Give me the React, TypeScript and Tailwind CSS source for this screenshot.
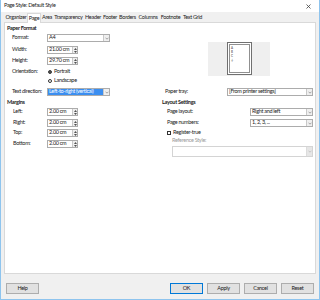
import React from "react";

const Combo = ({ w, text, selected, h = 8, disabled }: { w: number; text: string; selected?: boolean; h?: number; disabled?: boolean }) => (
  <div
    className={`flex border ${disabled ? "border-[#d4d4d4]" : "border-[#acacac]"} bg-white`}
    style={{ width: w, height: h }}
  >
    <div className={`flex-1 flex items-center pl-[1px] ${selected ? "bg-[#3b8ef0] text-white" : ""} whitespace-nowrap overflow-hidden`}>
      {text}
    </div>
    <div className={`w-[6px] flex items-center justify-center border-l ${disabled ? "border-[#dcdcdc] bg-[#e6e6e6]" : "border-[#c8c8c8] bg-[#efefef]"}`}>
      <svg width="4" height="3" viewBox="0 0 4 3">
        <path d="M0.5 0.7 L2 2.2 L3.5 0.7" fill="none" stroke={disabled ? "#b0b0b0" : "#707070"} strokeWidth="0.6" />
      </svg>
    </div>
  </div>
);

const Spin = ({ text }: { text: string }) => (
  <div className="flex w-[31px] h-[8px] border border-[#acacac] bg-white">
    <div className="flex-1 flex items-center pl-[1px] whitespace-nowrap">{text}</div>
    <div className="w-[5px] flex flex-col border-l border-[#c8c8c8] bg-[#efefef]">
      <div className="flex-1 flex items-center justify-center">
        <svg width="3" height="2" viewBox="0 0 3 2"><path d="M0 2 L1.5 0 L3 2 Z" fill="#505050" /></svg>
      </div>
      <div className="flex-1 flex items-center justify-center">
        <svg width="3" height="2" viewBox="0 0 3 2"><path d="M0 0 L1.5 2 L3 0 Z" fill="#505050" /></svg>
      </div>
    </div>
  </div>
);

const tabs: [string, number][] = [
  ["Organizer", 22],
  ["Page", 14],
  ["Area", 12],
  ["Transparency", 31],
  ["Header", 18],
  ["Footer", 16],
  ["Borders", 19],
  ["Columns", 22],
  ["Footnote", 23],
  ["Text Grid", 21],
];

const Btn = ({ children, def }: { children: React.ReactNode; def?: boolean }) => (
  <div
    className={`w-[33px] h-[11px] flex items-center justify-center bg-[#e1e1e1] border ${def ? "border-[#0078d7]" : "border-[#adadad]"}`}
  >
    {children}
  </div>
);

export default function App() {
  return (
    <div className="w-[320px] h-[300px] flex flex-col bg-[#f0f0f0] border-x border-b border-[#8ec4ee] font-['Lato',sans-serif] text-[5.5px] tracking-[-0.3px] leading-none text-[#1a1a1a] overflow-hidden">
      {/* title bar */}
      <div className="h-[12px] bg-white flex items-center justify-between pl-[3px] pr-[8px] shrink-0">
        <span>Page Style: Default Style</span>
        <svg width="5" height="5" viewBox="0 0 5 5">
          <path d="M0.5 0.5 L4.5 4.5 M4.5 0.5 L0.5 4.5" stroke="#404040" strokeWidth="0.8" />
        </svg>
      </div>
      <div className="flex-1 flex flex-col px-[3px]">
        {/* tabs */}
        <div className="mt-[1px] h-[9px] flex items-end pl-[1px]">
          {tabs.map(([t, w]) => (
            <div
              key={t}
              className={`h-[9px] flex items-center justify-center whitespace-nowrap ${
                t === "Page" ? "bg-white border-x border-t border-[#d9d9d9] -mb-[1px] h-[10px] relative z-10" : ""
              }`}
              style={{ width: w }}
            >
              {t}
            </div>
          ))}
        </div>
        {/* panel */}
        <div className="h-[252px] bg-white border border-[#d9d9d9] flex">
          {/* left column */}
          <div className="w-[155px] flex flex-col">
            <div className="h-[11px] flex items-center pl-[2px] font-bold">Paper Format</div>
            <div className="h-[8px] flex items-center pl-[7px]">
              <span className="w-[35px]">Format:</span>
              <Combo w={63} text="A4" />
            </div>
            <div className="mt-[4px] h-[8px] flex items-center pl-[7px]">
              <span className="w-[35px]">Width:</span>
              <Spin text="21.00 cm" />
            </div>
            <div className="mt-[3px] h-[8px] flex items-center pl-[7px]">
              <span className="w-[35px]">Height:</span>
              <Spin text="29.70 cm" />
            </div>
            <div className="mt-[3px] h-[8px] flex items-center pl-[7px]">
              <span className="w-[36px]">Orientation:</span>
              <span className="w-[4px] h-[4px] rounded-full border border-[#333] flex items-center justify-center mr-[2px]">
                <span className="w-[2px] h-[2px] rounded-full bg-[#222]" />
              </span>
              <span>Portrait</span>
            </div>
            <div className="mt-[1px] h-[8px] flex items-center pl-[7px]">
              <span className="w-[36px]" />
              <span className="w-[4px] h-[4px] rounded-full border border-[#333] mr-[2px]" />
              <span>Landscape</span>
            </div>
            <div className="mt-[3px] h-[8px] flex items-center pl-[7px]">
              <span className="w-[35px]">Text direction:</span>
              <Combo w={63} text="Left-to-right (vertical)" selected />
            </div>
            <div className="mt-[3px] h-[8px] flex items-center pl-[2px] font-bold">Margins</div>
            {[
              ["Left:", 1],
              ["Right:", 3],
              ["Top:", 2],
              ["Bottom:", 3],
            ].map(([l, m]) => (
              <div key={l as string} className="h-[8px] flex items-center pl-[8px]" style={{ marginTop: m as number }}>
                <span className="w-[34px]">{l}</span>
                <Spin text="2.00 cm" />
              </div>
            ))}
          </div>
          {/* right column */}
          <div className="flex-1 flex flex-col pr-[1px]">
            <div className="mt-[19px] ml-[48px] w-[62px] h-[34px] bg-[#efefef] flex">
              <div className="ml-[19px] w-[25px] h-[33px] border border-[#707070] bg-white p-[1px]">
                <div className="w-full h-full border border-[#909090] flex flex-col pl-[1px] pt-[1px] text-[3px] leading-[4px] text-[#333]">
                  <span>A</span>
                  <span>B</span>
                  <span>C</span>
                  <span>↓</span>
                </div>
              </div>
            </div>
            <div className="mt-[12px] h-[8px] flex items-center pl-[5px]">
              <span className="w-[62px]">Paper tray:</span>
              <Combo w={86} text="[From printer settings]" />
            </div>
            <div className="mt-[3px] h-[8px] flex items-center pl-[2px] font-bold">Layout Settings</div>
            <div className="mt-[1px] h-[8px] flex items-center pl-[7px]">
              <span className="w-[83px]">Page layout:</span>
              <Combo w={63} text="Right and left" />
            </div>
            <div className="mt-[3px] h-[8px] flex items-center pl-[7px]">
              <span className="w-[83px]">Page numbers:</span>
              <Combo w={63} text="1, 2, 3, ..." />
            </div>
            <div className="mt-[2px] h-[8px] flex items-center pl-[7px]">
              <span className="w-[4px] h-[4px] border border-[#333] mr-[2px]" />
              <span>Register-true</span>
            </div>
            <div className="mt-[1px] h-[6px] flex items-center pl-[12px] text-[#9a9a9a]">Reference Style:</div>
            <div className="mt-[2px] pl-[12px]">
              <Combo w={141} h={11} text="" disabled />
            </div>
          </div>
        </div>
        {/* buttons */}
        <div className="mt-[9px] h-[11px] flex items-center pl-[2px] pr-[2px]">
          <Btn>Help</Btn>
          <div className="flex-1" />
          <div className="flex gap-[4px]">
            <Btn def>OK</Btn>
            <Btn>Apply</Btn>
            <Btn>Cancel</Btn>
            <Btn>Reset</Btn>
          </div>
        </div>
      </div>
    </div>
  );
}
